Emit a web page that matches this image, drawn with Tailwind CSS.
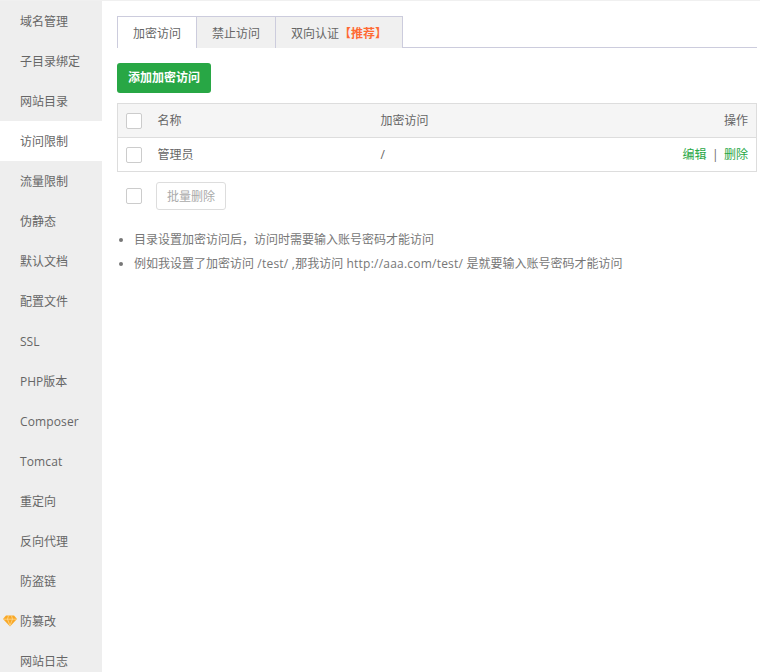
<!DOCTYPE html>
<html lang="zh-CN">
<head>
    <meta charset="UTF-8">
    <title>访问限制</title>
    <script src="https://cdn.jsdelivr.net/npm/@tailwindcss/browser@4"></script>
</head>
<body class="bg-white font-['Open_Sans','Noto_Sans_CJK_SC',sans-serif] text-[12px] text-[#666] overflow-hidden">
    <div class="flex h-[672px] w-[760px] overflow-hidden border-t border-[#f0f0f0]">
        <!-- Sidebar -->
        <aside class="w-[102px] shrink-0 bg-[#eeeeee] text-[#666]">
            <div class="h-10 pl-5 leading-[42px]">域名管理</div>
            <div class="h-10 pl-5 leading-[42px]">子目录绑定</div>
            <div class="h-10 pl-5 leading-[42px]">网站目录</div>
            <div class="h-10 pl-5 leading-[42px] bg-white">访问限制</div>
            <div class="h-10 pl-5 leading-[42px]">流量限制</div>
            <div class="h-10 pl-5 leading-[42px]">伪静态</div>
            <div class="h-10 pl-5 leading-[42px]">默认文档</div>
            <div class="h-10 pl-5 leading-[42px]">配置文件</div>
            <div class="h-10 pl-5 leading-[42px]">SSL</div>
            <div class="h-10 pl-5 leading-[42px]">PHP版本</div>
            <div class="h-10 pl-5 leading-[42px] tracking-[0.12px]">Composer</div>
            <div class="h-10 pl-5 leading-[42px] tracking-[0.12px]">Tomcat</div>
            <div class="h-10 pl-5 leading-[42px]">重定向</div>
            <div class="h-10 pl-5 leading-[42px]">反向代理</div>
            <div class="h-10 pl-5 leading-[42px]">防盗链</div>
            <div class="relative h-10 pl-5 leading-[42px]">
                <svg class="absolute left-[3px] top-[14px]" width="14" height="12" viewBox="0 0 14 12">
                    <path d="M3 0.5h8l3 3.5-7 7.5-7-7.5z" fill="#f9a825"/>
                    <path d="M0.5 4.2h13M4.5 4.2l2.5 6.5 2.5-6.5M4.5 4.2l1-3.5M9.5 4.2l-1-3.5" stroke="#ffe0a0" stroke-width="0.7" fill="none"/>
                </svg>
                防篡改
            </div>
            <div class="h-10 pl-5 leading-[42px]">网站日志</div>
        </aside>

        <!-- Main -->
        <main class="flex-1 pl-[15px] pr-[3px] pt-[15px]">
            <!-- Tabs -->
            <div class="flex h-[32px] border-b border-[#ccccdd]">
                <div class="h-[32px] w-[80px] border border-b-0 border-[#ccccdd] bg-white text-center leading-[34px] text-[#666]">加密访问</div>
                <div class="h-[32px] w-[79px] border-t border-r border-[#ccccdd] bg-[#f0f0f0] text-center leading-[34px] text-[#666]">禁止访问</div>
                <div class="h-[32px] w-[127px] border-t border-r border-[#ccccdd] bg-[#f0f0f0] text-center leading-[34px] text-[#666]">双向认证<span class="font-bold text-[#ff6a33]">【推荐】</span></div>
            </div>

            <button class="mt-[15px] block h-[30px] w-[94px] rounded-[3px] bg-[#28a745] text-center text-[12px] font-bold text-white">添加加密访问</button>

            <!-- Table -->
            <div class="mt-[10px] border border-[#dddddd]">
                <div class="flex h-[34px] items-center border-b border-[#dddddd] bg-[#f5f5f5] pl-2 pr-2">
                    <span class="h-4 w-4 rounded-[2px] border border-[#cccccc] bg-white"></span>
                    <span class="ml-[15.5px] w-[223px]">名称</span>
                    <span class="flex-1">加密访问</span>
                    <span>操作</span>
                </div>
                <div class="flex h-[33px] items-center pl-2 pr-2">
                    <span class="h-4 w-4 rounded-[2px] border border-[#cccccc] bg-white"></span>
                    <span class="ml-[15.5px] w-[223px]">管理员</span>
                    <span class="flex-1">/</span>
                    <span class="text-[#28a745]">编辑</span>
                    <span class="mx-[5.5px] text-[#666]">|</span>
                    <span class="text-[#28a745]">删除</span>
                </div>
            </div>

            <!-- Batch -->
            <div class="mt-[10px] flex items-center pl-[9px]">
                <span class="h-4 w-4 rounded-[2px] border border-[#cccccc] bg-white"></span>
                <button class="ml-[14px] h-[28px] w-[70px] rounded-[3px] border border-[#dddddd] bg-white pt-[2px] text-center text-[12px] text-[#aaaaaa]">批量删除</button>
            </div>

            <!-- Notes -->
            <ul class="mt-[18px] list-disc pl-[17px] text-[#777] marker:text-[#777]">
                <li class="h-6 leading-6">目录设置加密访问后，访问时需要输入账号密码才能访问</li>
                <li class="h-6 leading-6">例如我设置了加密访问<span class="tracking-[0.22px]"> /test/ ,</span>那我访问<span class="tracking-[0.22px]"> http://aaa.com/test/ </span>是就要输入账号密码才能访问</li>
            </ul>
        </main>
    </div>
</body>
</html>
